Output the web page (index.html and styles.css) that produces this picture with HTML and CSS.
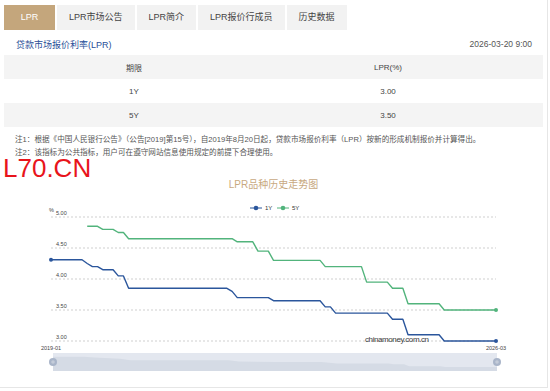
FILE: index.html
```html
<!DOCTYPE html>
<html lang="zh-CN">
<head>
  <meta charset="UTF-8" />
  <meta name="viewport" content="width=device-width, initial-scale=1.0"/>
  <title>LPR</title>
  <link rel="stylesheet" href="styles.css">
</head>
<body>

<div class="lpr-box">
  <div class="tabs">
    <div class="tab active">LPR</div>
    <div class="tab">LPR市场公告</div>
    <div class="tab">LPR简介</div>
    <div class="tab">LPR报价行成员</div>
    <div class="tab">历史数据</div>
  </div>

  <div class="title-row">
    <span class="title">贷款市场报价利率(LPR)</span>
    <span class="date">2026-03-20 9:00</span>
  </div>

  <div class="rate-table">
    <div class="rate-row grey">
      <div>期限</div><div>LPR(%)</div><div></div>
    </div>
    <div class="rate-row">
      <div>1Y</div><div>3.00</div><div></div>
    </div>
    <div class="rate-row grey">
      <div>5Y</div><div>3.50</div><div></div>
    </div>
  </div>

  <div class="notes">
    <p>注1：根据《中国人民银行公告》（公告[2019]第15号），自2019年8月20日起，贷款市场报价利率（LPR）按新的形成机制报价并计算得出。</p>
    <p>注2：该指标为公共指标，用户可在遵守网站信息使用规定的前提下合理使用。</p>
  </div>

  <!-- red stamp over the page -->
  <div class="stamp">L70.CN</div>

  <div class="chart-title">LPR品种历史走势图</div>

  <svg class="chart" width="547" height="195" viewBox="0 192 547 195">
    <!-- legend -->
    <g class="legend">
      <line x1="250" y1="208" x2="262" y2="208" stroke="#2b569c" stroke-width="1"/>
      <circle cx="256" cy="208" r="2.3" fill="#2b569c"/>
      <text x="265" y="210.3">1Y</text>
      <line x1="277" y1="208" x2="289" y2="208" stroke="#52b47c" stroke-width="1"/>
      <circle cx="283" cy="208" r="2.3" fill="#52b47c"/>
      <text x="292" y="210.3">5Y</text>
    </g>

    <!-- grid -->
    <g class="grid">
      <line x1="51" y1="217" x2="496" y2="217"/>
      <line x1="51" y1="248" x2="496" y2="248"/>
      <line x1="51" y1="279" x2="496" y2="279"/>
      <line x1="51" y1="310" x2="496" y2="310"/>
      <line x1="51" y1="341" x2="496" y2="341"/>
    </g>
    <g class="axis">
      <text x="49" y="211.5">%</text>
      <text x="56" y="215">5.00</text>
      <text x="56" y="246">4.50</text>
      <text x="56" y="277">4.00</text>
      <text x="56" y="308">3.50</text>
      <text x="56" y="339">3.00</text>
      <text x="51" y="349.5" text-anchor="middle">2019-01</text>
      <text x="496" y="349.5" text-anchor="middle">2026-03</text>
    </g>

    <text class="site" x="365" y="341.5" textLength="64">chinamoney.com.cn</text>

    <!-- series: x = month index from 2019-01, y = rate -->
    <g transform="translate(51 527) scale(5.1744 -62)">
      <polyline class="line-5y" points="7,4.85 9,4.85 10,4.80 12,4.80 13,4.75 14,4.75 15,4.65 35,4.65 36,4.60 39,4.60 40,4.45 42,4.45 43,4.30 52,4.30 53,4.20 60,4.20 61,3.95 65,3.95 66,3.85 68,3.85 69,3.60 75,3.60 76,3.50 86,3.50"/>
      <polyline class="line-1y" points="0,4.31 6,4.31 7,4.25 8,4.20 9,4.20 10,4.15 12,4.15 13,4.05 14,4.05 15,3.85 34,3.85 35,3.80 36,3.70 42,3.70 43,3.65 52,3.65 53,3.55 54,3.55 55,3.45 65,3.45 66,3.35 68,3.35 69,3.10 75,3.10 76,3.00 86,3.00"/>
    </g>
    <circle cx="51" cy="259.8" r="2" fill="#2b569c"/>
    <circle cx="496" cy="341" r="2" fill="#2b569c"/>
    <circle cx="496" cy="310" r="2" fill="#52b47c"/>

    <!-- zoom slider -->
    <rect x="53" y="353" width="444" height="18" fill="#e3e7ef"/>
    <g transform="translate(53 390.6) scale(5.163 -7.86)">
      <polygon fill="#d5dbe5" points="0,2.49 0,4.31 6,4.31 8,4.20 10,4.15 13,4.05 15,3.85 34,3.85 36,3.70 43,3.65 52,3.65 55,3.45 65,3.45 66,3.35 68,3.35 69,3.10 75,3.10 76,3.00 86,3.00 86,2.49"/>
    </g>
    <circle cx="53" cy="362" r="4" fill="#a9b5c9"/>
    <circle cx="53" cy="362" r="1.8" fill="#c4ccd9"/>
    <circle cx="497" cy="362" r="4" fill="#a9b5c9"/>
    <circle cx="497" cy="362" r="1.8" fill="#c4ccd9"/>
  </svg>
</div>

</body>
</html>
```

FILE: styles.css
```css
body {
  margin: 0;
  background: #fff;
  font-family: "Liberation Sans", "Noto Sans CJK SC", sans-serif;
  color: #333;
}

.lpr-box {
  position: relative;
  width: 548px;
  height: 388px;
  box-sizing: border-box;
  border-right: 1px solid #e6e6e6;
  border-bottom: 1px solid #e6e6e6;
  padding-top: 5px;
  overflow: hidden;
}

/* tabs */
.tabs {
  display: flex;
  gap: 2px;
  padding-left: 4px;
}

.tab {
  height: 25px;
  line-height: 25px;
  min-width: 51px;
  box-sizing: border-box;
  padding: 0 12px;
  text-align: center;
  font-size: 9px;
  background: #f2f2f2;
  color: #444;
}

.tab.active {
  background: #c4a67c;
  color: #fff;
}

/* heading line */
.title-row {
  display: flex;
  justify-content: space-between;
  align-items: center;
  height: 25px;
  box-sizing: border-box;
  padding: 3px 15px 0 16px;
}

.title {
  font-size: 9px;
  color: #2a4f98;
}

.date {
  font-size: 8.5px;
  color: #555;
}

/* table */
.rate-table {
  margin: 0 4px;
}

.rate-row {
  display: grid;
  grid-template-columns: 260px 248px 1fr;
  height: 24px;
  align-items: center;
  text-align: center;
  font-size: 8px;
  color: #444;
}

.rate-row.grey {
  background: #f4f4f4;
}

/* notes */
.notes {
  padding: 6px 15px 0;
  font-size: 7.6px;
  line-height: 13px;
  color: #555;
}

.notes p {
  margin: 0;
}

.stamp {
  position: absolute;
  left: 3px;
  top: 159px;
  font-size: 26px;
  line-height: 18px;
  color: #e8141b;
}

.chart-title {
  margin-top: 19px;
  height: 14px;
  line-height: 14px;
  text-align: center;
  font-size: 10px;
  color: #c8a97f;
}

/* chart */
.chart {
  display: block;
}

.chart text {
  font-family: "Liberation Sans", sans-serif;
}

.legend text {
  font-size: 6px;
  fill: #333;
}

.grid line {
  stroke: #cfcfcf;
  stroke-width: 1;
  stroke-dasharray: 2 2;
}

.axis text {
  font-size: 5.5px;
  fill: #444;
}

.site {
  font-size: 8px;
  fill: #3a3a3a;
}

.line-1y,
.line-5y {
  fill: none;
  stroke-width: 1.4;
  stroke-linejoin: round;
  vector-effect: non-scaling-stroke;
}

.line-1y {
  stroke: #2b569c;
}

.line-5y {
  stroke: #52b47c;
}
```
